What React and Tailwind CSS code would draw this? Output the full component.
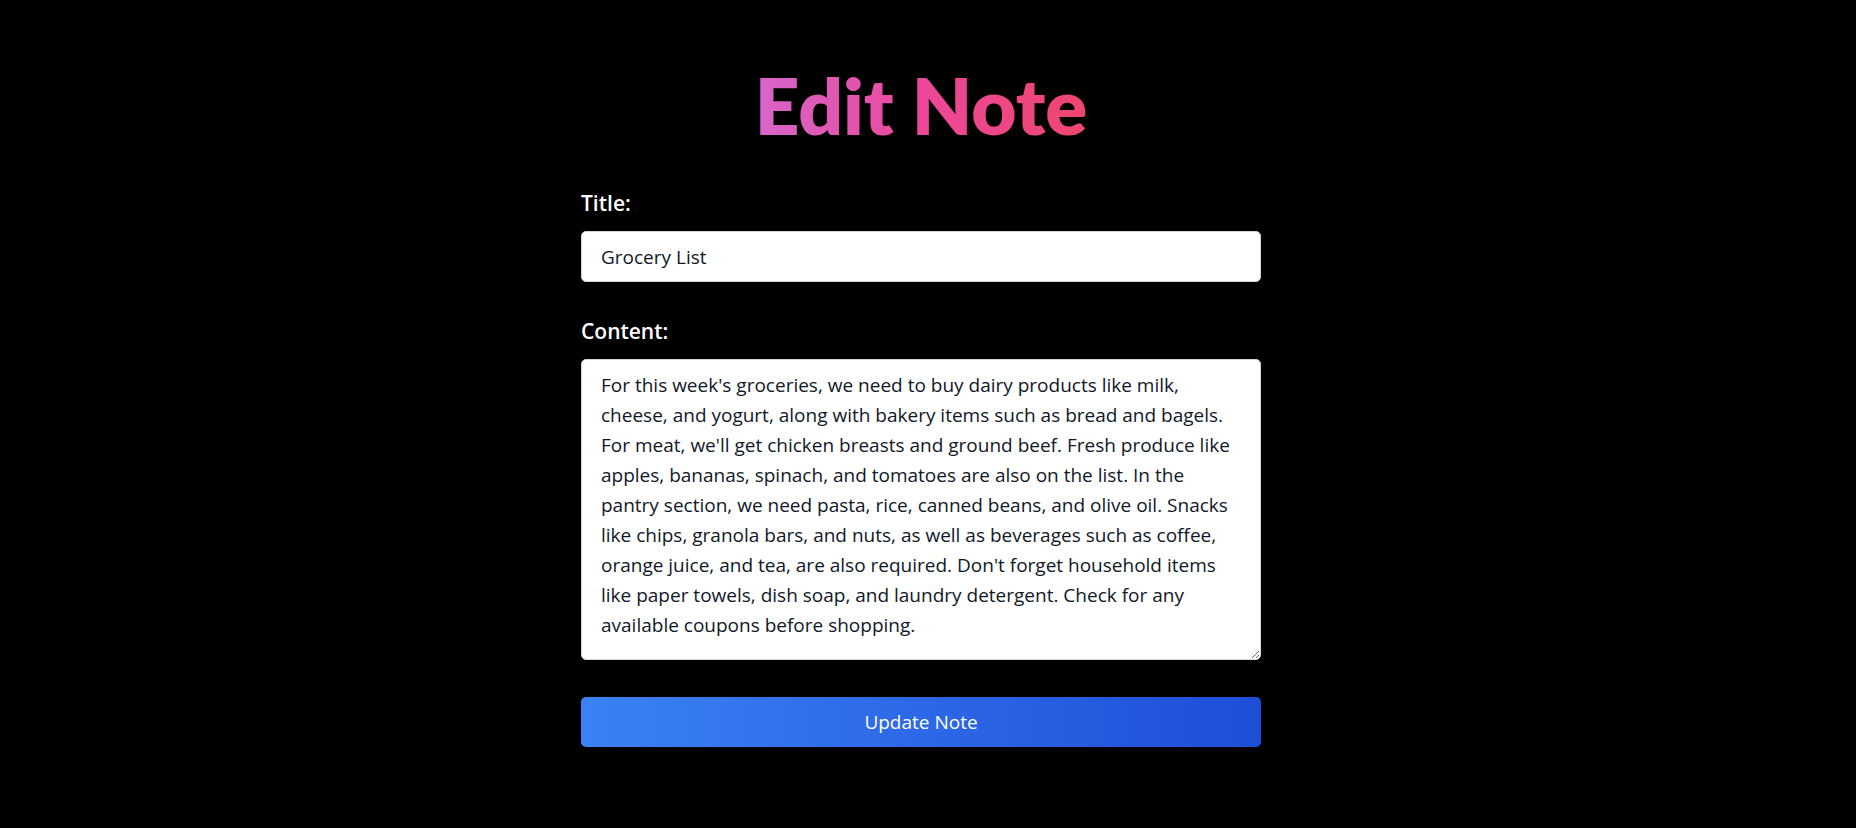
import { useState } from "react";

const initialContent =
  "For this week's groceries, we need to buy dairy products like milk, cheese, and yogurt, along with bakery items such as bread and bagels. For meat, we'll get chicken breasts and ground beef. Fresh produce like apples, bananas, spinach, and tomatoes are also on the list. In the pantry section, we need pasta, rice, canned beans, and olive oil. Snacks like chips, granola bars, and nuts, as well as beverages such as coffee, orange juice, and tea, are also required. Don't forget household items like paper towels, dish soap, and laundry detergent. Check for any available coupons before shopping.";

export default function App() {
  const [title, setTitle] = useState("Grocery List");
  const [content, setContent] = useState(initialContent);

  const handleSubmit = (e) => {
    e.preventDefault();
  };

  return (
    <div className="min-h-screen bg-black font-['Open_Sans',sans-serif]">
      <div className="flex justify-center pr-[14px] pt-[66px] pb-12">
        <div className="w-[680px]">
          <h1 className="mb-[45px] bg-[linear-gradient(to_right,#c084fc,#ec4899,#ef4444)] bg-clip-text text-center font-['Lato',sans-serif] text-[78px] font-extrabold leading-none text-transparent">
            Edit Note
          </h1>

          <form onSubmit={handleSubmit}>
            <div className="mb-[35px]">
              <label htmlFor="note-title" className="mb-[14px] block text-[21px] font-semibold leading-[28px] text-white">
                Title:
              </label>
              <input
                id="note-title"
                type="text"
                value={title}
                onChange={(e) => setTitle(e.target.value)}
                className="block w-full rounded-[5px] border border-gray-300 bg-white px-[19px] py-[9.5px] text-[19px] leading-[30px] text-[#111827] outline-none"
              />
            </div>

            <div className="mb-[37px]">
              <label htmlFor="note-content" className="mb-[14px] block text-[21px] font-semibold leading-[28px] text-white">
                Content:
              </label>
              <textarea
                id="note-content"
                value={content}
                onChange={(e) => setContent(e.target.value)}
                className="block h-[301px] w-full rounded-[5px] border border-gray-300 bg-white px-[19px] py-[9.5px] text-[19px] leading-[30px] text-[#111827] outline-none"
              />
            </div>

            <button
              type="submit"
              className="block h-[50px] w-full rounded-[5px] bg-[linear-gradient(to_right,#3b82f6,#1d4ed8)] text-[19px] text-white"
            >
              Update Note
            </button>
          </form>
        </div>
      </div>
    </div>
  );
}
